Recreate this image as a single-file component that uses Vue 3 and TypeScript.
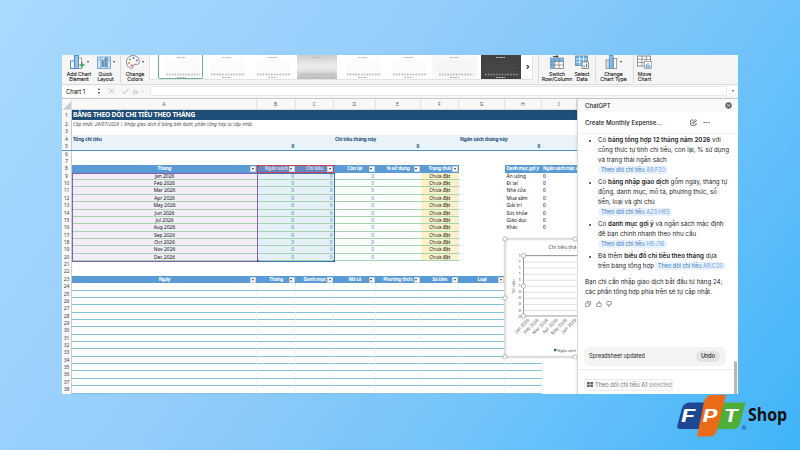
<template>
  <div class="stage">
    <div class="window">
      <div class="ribbon">
        <div class="tool" style="width: 34px">
          <div class="tool-icon">
            <svg width="15" height="14" viewBox="0 0 15 14"><rect x="0.5" y="6" width="4" height="7.5" fill="#fff" stroke="#4d8fcb" /><rect x="4.5" y="0.5" width="4" height="13" fill="#8fc3ef" stroke="#4d8fcb" /><rect x="8.5" y="3" width="3" height="10.5" fill="#fff" stroke="#777" stroke-width=".7" /><path d="M12 7v6M9.500 10h5" stroke="#40a060" stroke-width="1.300" /></svg>
            <i class="caret"></i>
          </div>
          <span>Add Chart<br>Element</span>
        </div>
        <div class="tool" style="width: 19px">
          <div class="tool-icon">
            <svg width="14" height="14" viewBox="0 0 14 14"><rect x=".5" y="2" width="13" height="11.500" fill="#cfe5f7" stroke="#5d9bd0" stroke-width=".8" /><path d="M1 5h12M4 2v11M10 2v11" stroke="#65a3d7" stroke-width=".8" /><path d="M5 12V6h2v6M8 12V3h2v9" fill="#6db1ea" stroke="#666" stroke-width=".6" /></svg>
            <i class="caret"></i>
          </div>
          <span>Quick<br>Layout</span>
        </div>
        <div class="rule first"></div>
        <div class="tool" style="width: 28px">
          <div class="tool-icon">
            <svg width="14" height="14" viewBox="0 0 14 14"><path d="M7 .6C3 .6.6 3.400.6 7s2.500 6.300 5 6.300c2 0 .7-2.500 2-3.600s5.700 1 5.700-3C13.300 3 10.500.6 7 .6z" fill="#fff" stroke="#666" stroke-width=".8" /><circle cx="4" cy="4.500" r="1" fill="#5eae4f" /><circle cx="7.500" cy="3" r="1" fill="#3c8bd0" /><circle cx="10.700" cy="5.500" r="1" fill="#8c5bb0" /><circle cx="3" cy="8" r="1" fill="#e08c35" /><circle cx="5.500" cy="10.600" r="1" fill="#d34848" /></svg>
            <i class="caret"></i>
          </div>
          <span>Change<br>Colors</span>
        </div>
        <div class="gallery">
          <div v-for="(s, i) in chartStyles" :key="i" class="thumb" :class="s">
            <svg width="39" height="24" viewBox="0 0 39 24">
              <path d="M3 7h34M3 10h34M3 13h34M3 16h34" class="grid-line" />
              <path d="M4 19.500h34" class="ticks" />
              <path d="M15 2.500h9M15 22.500h9" class="caption" />
            </svg>
          </div>
          <b class="more">›</b>
        </div>
        <div class="rule"></div>
        <div class="tool" style="width: 30px">
          <div class="tool-icon">
            <svg width="14" height="14" viewBox="0 0 14 14"><rect x=".5" y="3" width="13" height="10.500" fill="#fff" stroke="#777" stroke-width=".8" /><rect x=".5" y="3" width="4" height="10.500" fill="#6fb4ec" /><rect x=".5" y="3" width="13" height="3.500" fill="#6fb4ec" /><path d="M.5 6.500h13M.5 10h13M4.800 3v10M9 3v10" stroke="#777" stroke-width=".7" /><path d="M3 1.500h5l-1.500-1.500M8 1.500L6.500 3" fill="none" stroke="#333" stroke-width=".9" /></svg>
          </div>
          <span>Switch<br>Row/Column</span>
        </div>
        <div class="tool" style="width: 20px">
          <div class="tool-icon">
            <svg width="14" height="14" viewBox="0 0 14 14"><rect x=".5" y="1" width="12" height="9.500" fill="#67afe9" stroke="#66809a" stroke-width=".8" /><path d="M.5 4h12M.5 7.200h12M4.500 1v9.500M8.500 1v9.500" stroke="#fff" stroke-width=".7" /><rect x="7" y="7" width="6.500" height="6.500" fill="#fff" stroke="#666" stroke-width=".7" /><path d="M9 12.500v-2.500M11.500 12.500v-4" stroke="#3b83c0" /></svg>
          </div>
          <span>Select<br>Data</span>
        </div>
        <div class="rule tight"></div>
        <div class="tool" style="width: 33px">
          <div class="tool-icon">
            <svg width="13" height="14" viewBox="0 0 13 14"><rect x="1" y="5" width="3.200" height="8.500" fill="#ddd" stroke="#777" stroke-width=".7" /><rect x="4.500" y=".5" width="3.500" height="13" fill="#7dbdf0" stroke="#4d8fcb" stroke-width=".8" /><rect x="8.500" y="3.500" width="3.200" height="10" fill="#fff" stroke="#777" stroke-width=".7" /></svg>
            <i class="caret"></i>
          </div>
          <span>Change<br>Chart Type</span>
        </div>
        <div class="rule tight"></div>
        <div class="tool" style="width: 19px">
          <div class="tool-icon">
            <svg width="15" height="14" viewBox="0 0 15 14"><rect x=".5" y="1" width="13" height="10" fill="#fff" stroke="#777" stroke-width=".8" /><path d="M.5 4.300h13M.5 7.600h13M5 1v10M9.300 1v10" stroke="#777" stroke-width=".7" /><rect x="7.500" y="6.500" width="7" height="7" fill="#fff" stroke="#777" stroke-width=".6" /><path d="M9.300 13V9.500M11 13V8M12.800 13v-3" stroke="#4d94d0" /></svg>
          </div>
          <span>Move<br>Chart</span>
        </div>
      </div>

      <div class="formula">
        <div class="name-box"><span>Chart 1</span><span class="stepper"><i class="up"></i><i class="down"></i></span></div>
        <svg class="fx-icons" width="44" height="12" viewBox="0 0 44 12"><path d="M3 3.500l5 5M8 3.500l-5 5M16.500 6.500l2 2 4-5" fill="none" stroke="#b5b5b5" stroke-width=".9" /><text x="27" y="8.500">fx</text><path d="M35.500 5.800l1.200 1.200 1.200-1.200" fill="none" stroke="#b5b5b5" stroke-width=".6" /></svg>
        <div class="formula-input"></div>
        <div class="formula-drop"><i class="caret"></i></div>
      </div>

      <div class="work">
        <div class="sheet">
          <div class="row col-head">
            <span class="num corner"></span>
            <span v-for="c in columns" :key="c">{{ c }}</span>
          </div>
          <div class="row title"><span class="num">1</span><b>BẢNG THEO DÕI CHI TIÊU THEO THÁNG</b></div>
          <div class="row note"><span class="num">2</span><em>Cập nhật: 24/07/2026 | Nhập giao dịch ở bảng bên dưới; phần tổng hợp tự cập nhật.</em></div>
          <div class="row gap3"><span class="num">3</span></div>
          <div class="row sum">
            <span class="num">4</span>
            <b class="s-a">Tổng chi tiêu</b><b class="s-d">Chi tiêu tháng này</b><b class="s-g">Ngân sách tháng này</b>
          </div>
          <div class="row sum sum-val">
            <span class="num">5</span>
            <b class="v-b">0</b><b class="v-e">0</b><b class="v-h">0</b>
          </div>
          <div class="row"><span class="num">6</span></div>
          <div class="row"><span class="num">7</span></div>

          <div class="row">
            <span class="num">8</span>
            <span v-for="h in budgetHead" :key="h" class="th">{{ h }}<i class="filter"></i></span>
            <span></span>
            <span class="th plain">Danh mục gợi ý</span>
            <span class="th plain">Ngân sách mặc đ</span>
          </div>
          <div v-for="(m, i) in months" :key="m" class="row month">
            <span class="num">{{ i + 9 }}</span>
            <span class="m-name">{{ m }} 2026</span>
            <span class="val sel">0</span>
            <span class="val sel">0</span>
            <span class="val">0</span>
            <span class="val"></span>
            <span class="status">Chưa đặt</span>
            <span></span>
            <span class="cat">{{ categories[i] }}</span>
            <span class="cat">{{ categories[i] ? '0' : '' }}</span>
          </div>
          <div class="row"><span class="num">21</span></div>
          <div class="row"><span class="num">22</span></div>
          <div class="row">
            <span class="num">23</span>
            <span v-for="h in entryHead" :key="h" class="th">{{ h }}<i class="filter"></i></span>
          </div>
          <div v-for="n in 15" :key="n" class="row entry">
            <span class="num">{{ n + 23 }}</span>
            <span v-for="c in 8" :key="c" class="blank"></span>
          </div>

          <div class="range months-range"></div>
          <div class="range head-range"></div>
          <div class="range value-range"></div>

          <svg class="chart" width="76" height="123" viewBox="0 0 76 123">
            <rect x="3" y="3" width="90" height="118" fill="#fff" stroke="#dedede" stroke-width="2.500" />
            <text x="46.500" y="12.500" class="chart-title" textLength="28" lengthAdjust="spacingAndGlyphs">Chi tiêu thá</text>
            <path v-for="g in 10" :key="g" :d="`M22 ${14 + g * 6.05}h60`" stroke="#d9d9d9" stroke-width=".8" />
            <path d="M80 19.500H21.500V80H80" fill="none" stroke="#929292" stroke-width=".9" />
            <text v-for="g in 11" :key="g" x="16.500" :y="15 + g * 6.05" class="tick">{{ g < 7 ? 1 : 0 }}</text>
            <text class="tick" transform="translate(12.500 57) rotate(-90)">Số tiền</text>
            <text v-for="(m, i) in months.slice(0, 6)" :key="m" class="month-tick" :transform="`translate(${27.500 + i * 9.400} 84.500) rotate(-45)`">{{ m }} 2026</text>
            <rect x="52" y="112.800" width="2.400" height="2.400" fill="#17638f" />
            <text x="55.300" y="115.700" class="legend">Ngân sách</text>
            <circle v-for="(p, i) in handles" :key="i" :cx="p[0]" :cy="p[1]" r="2.200" fill="#fff" stroke="#999" stroke-width=".7" />
          </svg>
        </div>

        <aside class="panel">
          <div class="panel-top"><span>ChatGPT</span>
            <svg width="7" height="7" viewBox="0 0 7 7"><circle cx="3.500" cy="3.500" r="3.200" fill="#666" /><path d="M2.300 2.300l2.400 2.400M4.700 2.300L2.300 4.700" stroke="#fff" stroke-width=".8" /></svg>
          </div>
          <div class="panel-title">
            <span>Create Monthly Expense...</span>
            <svg width="7" height="7" viewBox="0 0 7 7"><path d="M3.300 1H1.500q-.8 0-.8.8v3.700q0 .8.8.8h3.700q.8 0 .8-.8V4M2.700 4.400l.3-1.200L5.600.6l.9.9-2.600 2.600z" fill="none" stroke="#333" stroke-width=".7" /></svg>
            <b>···</b>
          </div>
          <ul>
            <li>Có <b>bảng tổng hợp 12 tháng năm 2026</b> với<br>công thức tự tính chi tiêu, còn lại, % sử dụng<br>và trạng thái ngân sách<br><a>Theo dõi chi tiêu <span>A8:F20</span></a></li>
            <li>Có <b>bảng nhập giao dịch</b> gồm ngày, tháng tự<br>động, danh mục, mô tả, phương thức, số<br>tiền, loại và ghi chú<br><a>Theo dõi chi tiêu <span>A23:H83</span></a></li>
            <li>Có <b>danh mục gợi ý</b> và ngân sách mặc định<br>để bạn chỉnh nhanh theo nhu cầu<br><a>Theo dõi chi tiêu <span>H8:J16</span></a></li>
            <li>Đã thêm <b>biểu đồ chi tiêu theo tháng</b> dựa<br>trên bảng tổng hợp <a class="inline">Theo dõi chi tiêu <span>A8:C20</span></a></li>
          </ul>
          <p>Bạn chỉ cần nhập giao dịch bắt đầu từ hàng 24;<br>các phần tổng hợp phía trên sẽ tự cập nhật.</p>
          <div class="feedback">
            <svg width="6" height="6" viewBox="0 0 6 6"><rect x=".4" y="1.900" width="3.700" height="3.700" rx=".8" /><path d="M2 1.700V1q0-.6.6-.6H5q.6 0 .6.600v2.400q0 .6-.6.6h-.7" /></svg>
            <svg width="6" height="6" viewBox="0 0 6 6"><path d="M.5 2.800h1.200L3 .4q1 .1.700 1.100l-.2.900h1.300q.8.100.7.900l-.4 1.500q-.2.700-.9.700H.9q-.5-.9-.4-2.700z" /></svg>
            <svg width="6" height="6" viewBox="0 0 6 6"><path d="M5.500 3.200H4.300L3 5.600q-1-.1-.7-1.100l.2-.9H1.200q-.8-.1-.7-.9L.9 1.200Q1.100.5 1.800.5h3.300q.5.900.4 2.700z" /></svg>
          </div>
          <div class="updated"><span>Spreadsheet updated</span><button>Undo</button></div>
          <div class="context">
            <div class="context-chip">
              <svg width="6" height="5" viewBox="0 0 6 5"><path d="M0 0h2.700v2.200H0zM3.300 0H6v2.200H3.300zM0 2.800h2.700V5H0zM3.300 2.800H6V5H3.300z" fill="#666" /></svg>
              <span>Theo dõi chi tiêu A1 <i>selected</i></span>
            </div>
          </div>
          <div class="scrollbar"></div>
        </aside>
      </div>
    </div>

    <svg class="logo" width="116" height="48" viewBox="0 0 116 48">
      <path d="M14 9.500h14L22 36H3q-3.500 0-2.500-4l4.500-17q1.800-5.500 9-5.500z" fill="#1d4795" />
      <path d="M46 9.500h22.500L63 31q-1.500 5-7 5H40z" fill="#4fae37" />
      <path d="M35.500 2H49l-9.300 36q-1.700 5.500-7.500 5.500H20L27 9q1.500-7 8.500-7z" fill="#ea6a18" />
      <text x="4" y="28.500" class="fpt" textLength="14" lengthAdjust="spacingAndGlyphs">F</text>
      <text x="25.500" y="28.500" class="fpt" textLength="15" lengthAdjust="spacingAndGlyphs">P</text>
      <text x="46.500" y="28.500" class="fpt" textLength="14.500" lengthAdjust="spacingAndGlyphs">T</text>
      <text x="64.500" y="36.500" class="reg">®</text>
      <text x="71" y="28" class="shop" textLength="39" lengthAdjust="spacingAndGlyphs">Shop</text>
    </svg>
  </div>
</template>

<script setup lang="ts">
const columns = ['A', 'B', 'C', 'D', 'E', 'F', 'G', 'H', 'I']
const chartStyles = ['active', '', '', 'silver', '', '', 'shade', 'dark']
const budgetHead = ['Tháng', 'Ngân sách', 'Chi tiêu', 'Còn lại', '% sử dụng', 'Trạng thái']
const entryHead = ['Ngày', 'Tháng', 'Danh mục', 'Mô tả', 'Phương thức', 'Số tiền', 'Loại']
const months = ['Jan', 'Feb', 'Mar', 'Apr', 'May', 'Jun', 'Jul', 'Aug', 'Sep', 'Oct', 'Nov', 'Dec']
const categories = ['Ăn uống', 'Đi lại', 'Nhà cửa', 'Mua sắm', 'Giải trí', 'Sức khỏe', 'Giáo dục', 'Khác']

// resize handles: chart frame, then plot area
const handles: [number, number][] = [
  [3, 3], [3, 62], [3, 121], [73, 3], [73, 121],
  [21.5, 19.5], [21.5, 50], [21.5, 80],
]
</script>

<style>
body { background: #8fcefc; overflow: hidden; }
</style>

<style scoped>
* { box-sizing: border-box; }
.stage { position: relative; width: 800px; height: 450px; padding: 55px 62px; background: linear-gradient(125deg, #a9dafe 0%, #94ccfa 40%, #70c3fa 70%, #3fb4f8 100%); font-family: Inter, "Noto Sans", sans-serif; }
.window { width: 676px; height: 339px; display: flex; flex-direction: column; overflow: hidden; background: #fff; }

.ribbon { height: 30px; display: flex; background: #f5f5f5; border-bottom: 1px solid #dcdcdc; }
.tool { display: flex; flex-direction: column; align-items: center; flex: none; font-size: 5.100px; line-height: 5.800px; color: #222; text-align: center; white-space: nowrap; -webkit-text-stroke: 0.100px #222; }
.tool-icon { display: flex; align-items: flex-start; gap: 2px; height: 16.500px; }
.caret { width: 0; height: 0; margin-top: 6px; border: 1.500px solid transparent; border-top: 2px solid #444; border-bottom: 0; }
.rule { width: 1px; height: 28px; background: #dadada; flex: none; margin: 0 3px 0 5px; }
.rule.first { margin: 0 0 0 5px; }
.rule.tight { margin: 0 1px 0 3px; }
.gallery { display: flex; align-items: flex-start; width: 384px; height: 25px; gap: 1px; padding-left: 8px; background: #fff; border: 1px solid #e2e2e2; border-top: 0; flex: none; }
.thumb { width: 45px; height: 24px; padding: 0 3px; flex: none; }
.thumb.active { border: 1px solid #6bb58b; border-top: 0; border-radius: 0 0 2px 2px; }
.thumb.silver { width: 40px; margin: 0 2px 0 1px; padding: 0; background: linear-gradient(#ccc, #eee 50%, #bbb); }
.thumb.dark { width: 40px; margin-left: 3px; padding: 0; background: #424242; }
.thumb.shade { background: #f8f8f8; }
.grid-line { stroke: #e8e8e8; stroke-width: 0.5; }
.ticks { stroke: #bbb; stroke-width: 2; stroke-dasharray: 1.600 1.200; }
.caption { stroke: #bbb; stroke-width: 1; stroke-dasharray: 2 0.500; }
.dark .grid-line { stroke: #555; }
.dark .ticks { stroke: #888; }
.more { margin: 6px 0 0 4px; font-size: 8px; line-height: 10px; }

.formula { height: 13.500px; flex: none; display: flex; align-items: center; background: #f7f7f7; border-bottom: 1px solid #c9c9c9; }
.name-box { display: flex; align-items: center; justify-content: space-between; width: 39px; height: 11px; padding: 0 1px 0 4px; background: #fff; font-size: 5.800px; }
.stepper { display: flex; flex-direction: column; gap: 2px; }
.stepper i { border: 1.500px solid transparent; }
.up { border-bottom: 2px solid #333 !important; border-top: 0 !important; }
.down { border-top: 2px solid #333 !important; border-bottom: 0 !important; }
.fx-icons { margin: 0 0 0 5px; }
.fx-icons text { font: italic 7px "Liberation Serif", serif; fill: #aaa; }
.formula-input { flex: 1; height: 10px; background: #fff; border: 1px solid #e8e8e8; border-radius: 2px; }
.formula-drop { width: 11px; height: 10px; display: flex; justify-content: center; background: #fff; }
.formula-drop .caret { margin-top: 4px; }

.work { flex: 1; display: flex; min-height: 0; }
.sheet { position: relative; width: 515px; flex: none; overflow: hidden; font-family: "Noto Sans", sans-serif; font-size: 4.900px; color: #111; }
.row { display: grid; grid-template-rows: 100%; grid-template-columns: 10px 185px 38.500px 38.500px 41.500px 45px 38.500px 46px 36.500px 35.500px; height: 7.360px; line-height: 7.700px; white-space: nowrap; }
.num { background: #f8f8f8; border-right: 1px solid #ccc; color: #444; text-align: center; font-size: 5px; letter-spacing: -0.1px; }
.col-head { height: 11px; line-height: 11px; background: #f8f8f8; border-bottom: 1px solid #ddd; color: #555; text-align: center; font-size: 5px; }
.col-head span { border-right: 1px solid #e1e1e1; }
.corner { background: linear-gradient(135deg, transparent 60%, #ccc 60%); }
.title { height: 10.500px; line-height: 10.500px; background: #1f4e79; color: #fff; }
.title .num, .note .num, .sum .num { grid-column: 1; }
.title b { grid-column: 2 / -1; padding-left: 1px; font-size: 6.700px; letter-spacing: -0.230px; }
.note { height: 8.300px; line-height: 8.300px; }
.note em { grid-column: 2 / 6; padding-left: 1px; color: #555; font-size: 4.760px; }
.gap3 { height: 7px; line-height: 6.500px; }
.sum { height: 7.700px; line-height: 8px; background: #e9f3f9; color: #1f4e79; }
.sum b { font-size: 4.800px; letter-spacing: -0.150px; }
.sum-val { line-height: 7px; border-bottom: 1.200px solid #5195c7; }
.s-a { grid-column: 2; padding-left: 1px; }
.s-d { grid-column: 5; padding-left: 1px; }
.s-g { grid-column: 8; padding-left: 1px; }
.v-b, .v-e, .v-h { text-align: right; padding-right: 1.500px; }
.v-b { grid-column: 3; }
.v-e { grid-column: 6; }
.v-h { grid-column: 9; }
.th { position: relative; background: #5b9bd5; color: #fff; font-weight: 700; text-align: center; font-size: 4.700px; letter-spacing: -0.150px; }
.th.plain { text-align: left; padding-left: 1.500px; font-size: 4.500px; letter-spacing: -0.180px; }
.filter { position: absolute; z-index: 2; right: 1px; top: 1px; width: 6px; height: 6px; background: #fff; border: 1px solid #c9d3dc; }
.filter::after { content: ""; position: absolute; left: 0.500px; top: 1px; border: 1.500px solid transparent; border-top: 2px solid #333; border-bottom: 0; }
.m-name, .val, .status { border-bottom: 1px solid #a5d4ae; }
.m-name { background: #f2edf8; text-align: center; }
.val { color: #3686c5; text-align: right; padding-right: 1.500px; }
.sel { background: #e6f0f9; }
.status { background: #fdf1cc; text-align: center; }
.cat { padding-left: 1.500px; }
.blank { border-bottom: 1px solid #84c1d8; border-right: 1px dotted #e4edf2; }

/* coloured outlines of the chart's source ranges */
.range { position: absolute; }
.months-range { left: 10px; top: 74px; width: 186px; height: 89px; border: 1px solid #8561b5; }
.head-range { left: 195px; top: 66px; width: 77px; height: 8px; border: 1px solid #c8475b; background: rgba(128, 80, 140, 0.25); }
.value-range { left: 195px; top: 74px; width: 78px; height: 89px; border: 1.500px solid #4472b8; border-left-color: #8561b5; }
.head-range::before, .head-range::after, .value-range::before, .value-range::after { content: ""; position: absolute; width: 2px; height: 2px; background: #b5344a; }
.head-range::before { left: -1px; top: -1px; }
.head-range::after { right: -1px; top: -1px; }
.value-range::before { left: -1px; bottom: -1px; background: #7045a5; }
.value-range::after { right: -1px; bottom: -1px; background: #3565b0; }
.chart { position: absolute; z-index: 3; left: 440px; top: 137px; }
.chart text { font-family: "Noto Sans", sans-serif; fill: #555; }
.chart .chart-title { font-size: 6px; }
.chart .tick { font-size: 4.300px; }
.chart .month-tick { font-size: 4.500px; text-anchor: end; }
.chart .legend { font-size: 4px; letter-spacing: -0.100px; }

.panel { position: relative; flex: 1; background: #fff; border-left: 1px solid #d8d8d8; font-size: 6.220px; color: #222; white-space: nowrap; box-shadow: -1px 0 2px rgba(0, 0, 0, 0.08); }
.panel-top { height: 13.500px; display: flex; align-items: center; justify-content: space-between; padding: 0 6px 0 7px; background: #f9f9f9; font-size: 6px; font-weight: 500; }
.panel-title { height: 22px; display: flex; align-items: center; padding: 0 0 1px 7px; border-bottom: 1px solid #f3f3f3; font-weight: 500; font-size: 6.100px; }
.panel-title span { width: 105px; }
.panel-title b { margin-left: 6px; font-size: 7px; }
ul { margin: 0; padding: 2.300px 0 0 20px; list-style: none; line-height: 9.750px; }
li { position: relative; margin-bottom: 2.900px; }
li::before { content: ""; position: absolute; left: -9px; top: 4px; width: 2px; height: 2px; border-radius: 50%; background: #333; }
li b { font-weight: 600; }
a { display: inline-block; height: 8px; line-height: 8px; padding: 0 3px; border-radius: 3px; background: #e9f2fe; color: #3478bd; font-size: 5.550px; vertical-align: middle; }
.inline { margin-left: -1px; }
a span { color: #6ba0dc; }
p { margin: 5.500px 0 0; padding-left: 7px; font-size: 6.180px; line-height: 9.900px; }
.feedback { display: flex; gap: 4.500px; padding: 4px 0 0 7px; height: 10px; }
.feedback svg { fill: none; stroke: #555; stroke-width: 0.600; }
.updated { display: flex; align-items: center; justify-content: space-between; width: 142px; height: 18.500px; margin: 40px 0 0 6px; padding: 0 6px 0 5px; border-radius: 5px; background: #f4f4f4; font-size: 5.500px; }
button { width: 24px; height: 11px; padding: 0; border: 0; border-radius: 6px; background: #e3e3e3; color: #222; font: 500 5.500px Inter, sans-serif; }
.context { width: 156px; margin-top: 3.500px; padding: 9px 0 0 6px; border-top: 1px solid #ececec; }
.context-chip { display: flex; align-items: center; gap: 2px; width: 89px; height: 11.500px; padding-left: 2px; border: 1px solid #ededed; border-radius: 3px; background: #fafafa; color: #777; font-size: 5.700px; }
.context-chip svg { flex: none; }
.context-chip i { font-style: normal; color: #999; }
.scrollbar { position: absolute; right: 1px; bottom: 0; width: 3px; height: 33px; border-radius: 2px 2px 0 0; background: #b7b7b7; }

.logo { position: absolute; left: 677px; top: 393px; }
.fpt { font: italic 700 17px Inter, sans-serif; fill: #fff; }
.reg { font: 700 6px "Open Sans", sans-serif; fill: #1d4795; }
.shop { font: 700 17px "Open Sans", sans-serif; fill: #111; }
</style>
